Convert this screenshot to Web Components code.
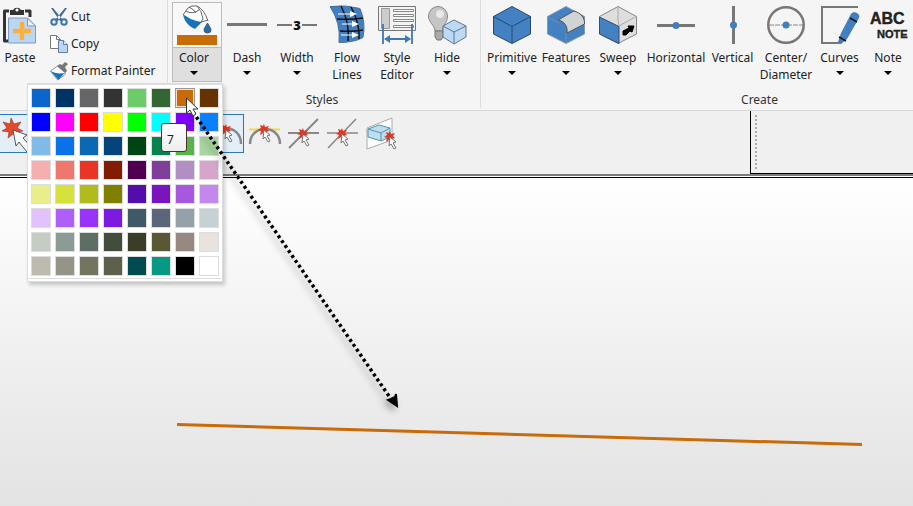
<!DOCTYPE html>
<html lang="en">
<head>
<meta charset="utf-8">
<title>Modeling workspace</title>
<style>
html,body{margin:0;height:100%}
body{font:12px/17px "Noto Sans","Open Sans",sans-serif;color:#222;overflow:hidden}
</style>
</head>
<body>
<cad-app></cad-app>
<script>
const ICONS = {
paste:[38,38,`<path d="M8 5H3.500v30H8M24 5h5v6" fill="none" stroke="#333" stroke-width="3" stroke-linejoin="round"/><path d="M9 9V4h3a4.500 4 0 0 1 8 0h3v5z" fill="#333"/><circle cx="16" cy="4" r="1.600" fill="#fff"/><path d="M7.500 12h19l8 8v17h-27z" fill="#bcd6f2" stroke="#7c9cc4"/><path d="M26.500 12v8h8z" fill="#e4effb" stroke="#7c9cc4"/><path d="M21 16v18M12 25h18" stroke="#f9b13c" stroke-width="4.500"/>`],
cut:[18,20,`<path d="M1 1h2l10 12-3 1zM17 1h-2L5 13l3 1z" fill="#44698f"/><circle cx="4" cy="15" r="2.700" fill="none" stroke="#3975b5" stroke-width="2"/><circle cx="14" cy="15" r="2.700" fill="none" stroke="#3975b5" stroke-width="2"/>`],
copy:[18,20,`<path d="M.5 1.500h6l4 4v9H.5z" fill="#fff" stroke="#777"/><path d="M6.500 1.500v4h4" fill="none" stroke="#777"/><path d="M8.500 6.500h5l4 4v8h-9z" fill="#bcd6f2" stroke="#5f7fa6"/><path d="M13.500 6.500v4h4" fill="#e4effb" stroke="#5f7fa6"/>`],
painter:[18,20,`<path d="m.5 10 7-5 8 7-1 2-7 5z" fill="#fff" stroke="#8a9aa8"/><path d="M.5 10c4 2 8 3 14 2l-6 7z" fill="#1872ba"/><path d="m7 5 3-2 2 1 3-3 3 2-3 3 2 4-2 2z" fill="#777"/>`],
bucket:[40,38,`<path d="M6 9 18 0l8 4 5 10-13 8z" fill="#fff"/><path d="M6 8c5 4 11 7 19 8l-7 7c-5-2-11-7-12-15z" fill="#1872ba"/><path d="M6 9 11 2Q14-1 20 0q7 3 11 15M9 5Q15 9 22 4M12 1q6 3 7 6M20 0q5 5 6 13l-2 3 7-2" fill="none" stroke="#666"/><path d="M30.500 17c-2 4-3.500 5-3.500 7a3.500 3 0 0 0 7 0c0-2-1.500-3-3.500-7z" fill="#1872ba" stroke="#556"/><path d="M0 29h40v10H0z" fill="#c86c05"/>`],
dash:[40,38,`<path d="M0 18.500h40" stroke="#777" stroke-width="3"/>`],
width:[40,38,`<path d="M0 19h15M25 19h15" stroke="#777" stroke-width="2"/><text x="20" y="24" text-anchor="middle" font-family="Open Sans,sans-serif" font-size="13" font-weight="800" fill="#111">3</text>`],
flow:[40,38,`<path d="M3 .5q16-2 30 2 6 14 3 29-9 5-24 5Q14 17 3 .5z" fill="#427fc2" stroke="#49709c"/><path d="M14 0q9 17 7 35M24 1q9 16 8 32M10 13q13 1 26-1M13 25q12 1 23-1" stroke="#111" stroke-width="1.500" fill="none"/><g stroke="#fff" stroke-width="1.200" fill="#fff"><path d="M11 8h14M15 18h12M14 29h13"/><path d="m23 5 7 3-7 3zM25 15l7 3-7 3zM25 26l7 3-7 3z" stroke="none"/></g>`],
style:[38,38,`<path d="M.5.5h37v24H.5z" fill="#f3f3f3" stroke="#777"/><path d="M3.500 2.500h8v20h-8z" fill="#ccc" stroke="#999"/><g fill="#fff" stroke="#888"><path d="M15.500 3.500h20v2h-20zM15.500 8.500h20v2h-20zM15.500 13.500h20v2h-20zM15.500 19.500h20v2h-20z"/></g><path d="M5 18v20M34 18v20M7 33h25" stroke="#4377b2" stroke-width="1.800"/><path d="m6 33 6-4v8zM33 33l-6-4v8z" fill="#4377b2"/>`],
hide:[38,38,`<path d="M7 25C7 19 .5 17 .5 10a9.500 9.500 0 0 1 19 0c0 7-5 9-5 15z" fill="#c5c5c5" stroke="#888"/><circle cx="12" cy="8" r="4" fill="#e8e8e8"/><path d="M7 25h8v6l-2 3H9l-2-3z" fill="#aaa" stroke="#777"/><path d="m26 14 12 6v11l-12 7-11-7V20z" fill="#bcdaf5" stroke="#63758a"/><path d="m15 20 11 6 12-6M26 26v12" fill="none" stroke="#63758a"/>`],
cube:[38,38,`<path d="m19 .5 18.500 10v17.500L19 37.500.5 28V10.500z" fill="#4481c3" stroke="#29486b"/><path d="M.5 10.500 19 20.500l18.500-10M19 20.500v17" fill="none" stroke="#29486b"/>`],
features:[38,38,`<path d="m19 .5 18.500 10v17.500L19 37.500.5 28V10.500z" fill="#4481c3" stroke="#8799ad"/><path d="M.5 11 12 17M19 27v10" fill="none" stroke="#788da6"/><path d="M11 14 27 5c7 2 11 7 10.500 13L20 27c1-7-3-12-9-13z" fill="#d2d3d4" stroke="#555"/>`],
sweep:[38,38,`<path d="m19 .5 18.500 10v17.500L19 37.500.5 28V10.500z" fill="#dedede" stroke="#888"/><path d="M.5 11 20 20.500v17L.5 28z" fill="#4481c3" stroke="#314f70"/><path d="m20 20 17-9.500M19 1v13M20 20l-1-6" fill="none" stroke="#aaa"/><path d="m24 25 6-3-1-2h6l-2 6-2-1-4 4h-3z" fill="#000" stroke="#000"/>`],
horizontal:[38,38,`<path d="M0 19.500h38" stroke="#777" stroke-width="3"/><circle cx="19" cy="19.500" r="3.500" fill="#3f7fbe"/>`],
vertical:[38,38,`<path d="M19.500 0v38" stroke="#777" stroke-width="3"/><circle cx="19.500" cy="19" r="3.500" fill="#3f7fbe"/>`],
center:[38,38,`<circle cx="19" cy="19" r="17.700" fill="none" stroke="#777" stroke-width="2.500"/><path d="M2 19h34" stroke="#888" stroke-dasharray="5 1"/><circle cx="19" cy="19" r="3.500" fill="#3f7fbe"/>`],
curves:[38,38,`<path d="M37 1H1v36h19" fill="none" stroke="#777" stroke-width="2"/><path d="m17 36 3-9L30 8c2-4 10-1 8 4L26 33l-6 5z" fill="#427fc0"/><path d="m29 12 7 4M18 31l7 4" stroke="#111" stroke-width="1.500"/>`],
note:[38,38,`<g font-family="Liberation Sans,Arial,sans-serif" font-weight="900" fill="#222" stroke="#222" stroke-width=".4"><text x="1" y="18" font-size="16">ABC</text><text x="8" y="32" font-size="11">NOTE</text></g>`],
bigsnap:[38,38,`<path d="m11 3 3 6 7-2-4 6 6 3-7 1 2 6-5-4-5 4 1-6-7-1 5-3-4-6 7 2z" fill="#e8472a" stroke="#913322" stroke-width=".6"/><path d="m13 15 14 5-4 3 9 10-5 4-8-10-3 4z" fill="#fff" stroke="#555"/>`],
arc:[38,38,`<path d="M6 29C6 8 36 8 36 29" fill="none" stroke="#888" stroke-width="2.500"/>@21,14`],
tangent:[38,38,`<path d="M5 14.500h31" stroke="#f2d84b" stroke-width="2"/><path d="M6 29C6 9 36 9 36 29" fill="none" stroke="#888" stroke-width="2.500"/>@20,14`],
cross:[38,38,`<path d="M5 18h31M6 33 35 4" stroke="#888" stroke-width="2"/>@20,18`],
crossthin:[38,38,`<path d="M5 18h31M6 33 34 4" stroke="#888" stroke-width="1.500"/>@20,18`],
face:[38,38,`<path d="M6 13 31 3v22L6 34z" fill="#fff" stroke="#aaa"/><path d="m7 14 11-4 11 3v9l-9 4-13-4z" fill="#bcdfef" stroke="#5d91ad"/><path d="m7 14 13 4 9-5M20 18v8" fill="none" stroke="#5d91ad"/>@29,21`]
};
const snapMark=(_,x,y)=>`<g transform="translate(${x} ${y})"><path d="m0-5 1 3 4-1-2 3 2 2-3 1v3l-3-2-3 2 1-4-3-1 3-2-1-3 3 1z" fill="#df3926"/><path d="m0 1 6 5-3 1 3 5-2 1-3-5-2 2z" fill="#fff" stroke="#777"/></g>`;
const define=(name,html)=>customElements.define(name,class extends HTMLElement{
  connectedCallback(){
    if(this.shadowRoot)return;
    this.attachShadow({mode:'open'}).innerHTML=typeof html==='function'?html(this):html;
  }
});
define('cad-icon',el=>{
  const [w,h,body]=ICONS[el.getAttribute('name')];
  return `<style>:host{display:block;flex:none}svg{display:block;overflow:visible}</style><svg width="${w}" height="${h}" viewBox="0 0 ${w} ${h}" aria-hidden="true">${body.replace(/@(\d+),(\d+)/,snapMark)}</svg>`;
});
define('ribbon-button',el=>`<style>
:host{display:block;flex:none;min-width:50px}
button{display:flex;flex-direction:column;align-items:center;box-sizing:border-box;width:100%;height:80px;padding:3px 0 0;border:1px solid transparent;background:none;font:inherit;color:inherit;text-align:center}
.label{margin-top:5px}
.arrow{margin-top:5px;border:4px solid transparent;border-top-color:#000;border-bottom:0}
:host([active]) button{border-color:#bbb;background:linear-gradient(#f8f8f8 44px,#bbb 44px 45px,#dfdfdf 45px)}
:host([active]) .label,:host([active]) .arrow{margin-right:6px}
</style><button type="button"><cad-icon name="${el.getAttribute('icon')}"></cad-icon><span class="label"><slot></slot></span>${el.hasAttribute('menu')?'<span class="arrow"></span>':''}</button>`);
define('ribbon-command',el=>`<style>
:host{display:block}button{display:flex;align-items:center;gap:3px;height:27px;padding:0;border:0;background:none;font:inherit;color:inherit;white-space:nowrap}</style>
<button type="button"><cad-icon name="${el.getAttribute('icon')}"></cad-icon><slot></slot></button>`);
define('ribbon-group',el=>`<style>
:host{display:flex;flex:none;flex-direction:column;box-sizing:border-box;height:108px;padding:2px 4px 0;border-right:1px solid #ddd}
.tools{display:flex;height:80px}.caption{margin-top:9px;text-align:center;color:#333}
</style><div class="tools"><slot></slot></div><div class="caption">${el.getAttribute('caption')||''}</div>`);
define('snap-tool',el=>`<style>
:host{display:block;flex:none}button{display:block;box-sizing:border-box;width:39px;height:39px;padding:0;border:0 solid #2878bd;background:none}
cad-icon{height:38px}
:host([active]) button{background:#e4eef8;box-shadow:inset 0 1px #2878bd,inset 0 -1px #2878bd}
:host([last]) button{border-right-width:1px}
</style><button type="button" aria-label="${el.getAttribute('label')}">${el.getAttribute('icon')?`<cad-icon name="${el.getAttribute('icon')}"></cad-icon>`:''}</button>`);
define('color-palette',()=>{
  const colors=`0a66cc 003366 666666 333333 6ccc69 336633 c86b05 663300
0000ff ff00ff ff0000 ffff00 00ff00 00ffff 7f00ff 0a80ff
7fbae8 0a72e8 0969b4 04447a 004511 078351 55b44b a9d5a0
f5afaf ee786e e93526 821c03 500050 7f4099 b18fc2 d5a5cc
e9ee8b d6e23c b1bc1c 808000 520daa 7914bf a857df c387ee
e2c2fd ad5ff7 9933fa 7d1ae0 405969 5d657b 94a1aa c5d1d5
c4ccc4 8c9b94 5e6e64 424d3d 3c3d29 595734 978881 e8e3de
bcbbae 959486 747560 5f604b 004b50 079985 000000 ffffff`.split(/\s+/);
  return `<style>
:host{display:block;box-sizing:border-box;padding:0 0 2px;background:#fff;border:1px solid #ddd;box-shadow:2px 3px 4px #0003}
.grid{display:grid;grid-template-columns:repeat(8,20px);gap:4px;padding:3px 3px 2px;border:solid #ddd;border-width:1px 0}
button{width:20px;height:20px;padding:0;border:1px solid #ddd}
button.on{border:1px solid #999;box-shadow:inset 0 0 0 1px #f1ddc8}
</style><div class="grid">${colors.map((c,i)=>`<button type="button" aria-label="Color ${i+1}" class="${i===6?'on':''}" style="background:#${c}"></button>`).join('')}</div>`;
});
define('model-view',`<style>
:host{display:block;flex:1;background:linear-gradient(#fff,#e3e3e3);overflow:hidden}svg{display:block}
</style><svg width="913" height="328" role="img" aria-label="Colored line"><path d="M177 246.500 862 266.500" stroke="#c86b08" stroke-width="3"/></svg>`);
define('pointer-callout',`<style>
:host{display:block;position:absolute;left:0;top:0;pointer-events:none}
svg{display:block;filter:drop-shadow(-3px 4px 3px #0005)}
.tip{position:absolute;left:161px;top:123px;box-sizing:border-box;width:26px;height:29px;padding:7px 0 0 5px;background:linear-gradient(#fff,#eee);border:1px solid #512b2b;border-radius:3px}
.mouse{position:absolute;left:185px;top:97px;filter:none}
</style><svg width="420" height="420"><path d="M193 112 391 399" stroke="#000" stroke-width="3.500" stroke-dasharray="3 3"/><path d="m397 406-9-6 3-1 4-2 1-3z" fill="#000" stroke="#000" stroke-width="2"/></svg>
<svg class="mouse" width="16" height="22"><path d="M1.500 1v15l3.500-3 3 6 3-2-3-5h5z" fill="#fff" stroke="#333"/></svg>
<div class="tip" role="tooltip">7</div>`);
define('cad-app',`<style>
:host{display:flex;flex-direction:column;height:100%;position:relative;overflow:hidden}
.ribbon{display:flex;flex:none;height:110px;background:#f5f5f5;border-bottom:1px solid #d6d6d6;overflow:hidden}
.commands{padding:1px 0 0 10px}
.clipboard{width:168px;box-sizing:border-box}
.paste{min-width:38px;margin-left:-4px}
.styles{padding-right:8px}
.create{min-width:558px;padding-left:4px}
.w47{min-width:47px}.w54{min-width:54px}.w60{min-width:60px}.w66{min-width:66px}
.snaps{display:flex;flex:none;height:63px;background:#f0f0f0;border-bottom:2px solid #7c7c7c}
.row{display:flex;flex:1;padding-top:3px}.first{width:49px;background:#e4eef8;box-shadow:inset 0 1px #2878bd,inset 0 -1px #2878bd;height:39px}
.dock{flex:0 0 163px;box-sizing:border-box;padding:4px;border:solid #000;border-width:0 0 1px 1px}
.grip{width:2px;height:54px;background:repeating-linear-gradient(#aaa 0 2px,transparent 2px 4px)}
.edge{flex:none;height:1px;background:#fff;border-bottom:1px solid #000}
color-palette{position:absolute;left:27px;top:83px;width:196px}
</style>
<header class="ribbon">
<ribbon-group class="clipboard"><ribbon-button class="paste" icon="paste">Paste</ribbon-button><div class="commands"><ribbon-command icon="cut">Cut</ribbon-command><ribbon-command icon="copy">Copy</ribbon-command><ribbon-command icon="painter">Format Painter</ribbon-command></div></ribbon-group>
<ribbon-group class="styles" caption="Styles"><ribbon-button icon="bucket" menu active>Color</ribbon-button><ribbon-button icon="dash" menu>Dash</ribbon-button><ribbon-button icon="width" menu>Width</ribbon-button><ribbon-button icon="flow">Flow<br>Lines</ribbon-button><ribbon-button icon="style">Style<br>Editor</ribbon-button><ribbon-button icon="hide" menu>Hide</ribbon-button></ribbon-group>
<ribbon-group class="create" caption="Create"><ribbon-button class="w54" icon="cube" menu>Primitive</ribbon-button><ribbon-button class="w54" icon="features" menu>Features</ribbon-button><ribbon-button icon="sweep" menu>Sweep</ribbon-button><ribbon-button class="w66" icon="horizontal">Horizontal</ribbon-button><ribbon-button class="w47" icon="vertical">Vertical</ribbon-button><ribbon-button class="w60" icon="center">Center/<br>Diameter</ribbon-button><ribbon-button class="w47" icon="curves" menu>Curves</ribbon-button><ribbon-button icon="note" menu>Note</ribbon-button></ribbon-group>
</header>
<div class="snaps"><div class="row"><div class="first"><snap-tool active icon="bigsnap" label="Point snap"></snap-tool></div><snap-tool active label="Endpoint snap"></snap-tool><snap-tool active label="Midpoint snap"></snap-tool><snap-tool active label="Center snap"></snap-tool><snap-tool active label="Grid snap"></snap-tool><snap-tool active last icon="arc" label="Arc snap"></snap-tool><snap-tool icon="tangent" label="Tangent snap"></snap-tool><snap-tool icon="cross" label="Intersection snap"></snap-tool><snap-tool icon="crossthin" label="Virtual intersection snap"></snap-tool><snap-tool icon="face" label="Face snap"></snap-tool></div><div class="dock"><div class="grip"></div></div></div>
<div class="edge"></div>
<model-view></model-view>
<color-palette></color-palette>
<pointer-callout></pointer-callout>`);
</script>
</body>
</html>
